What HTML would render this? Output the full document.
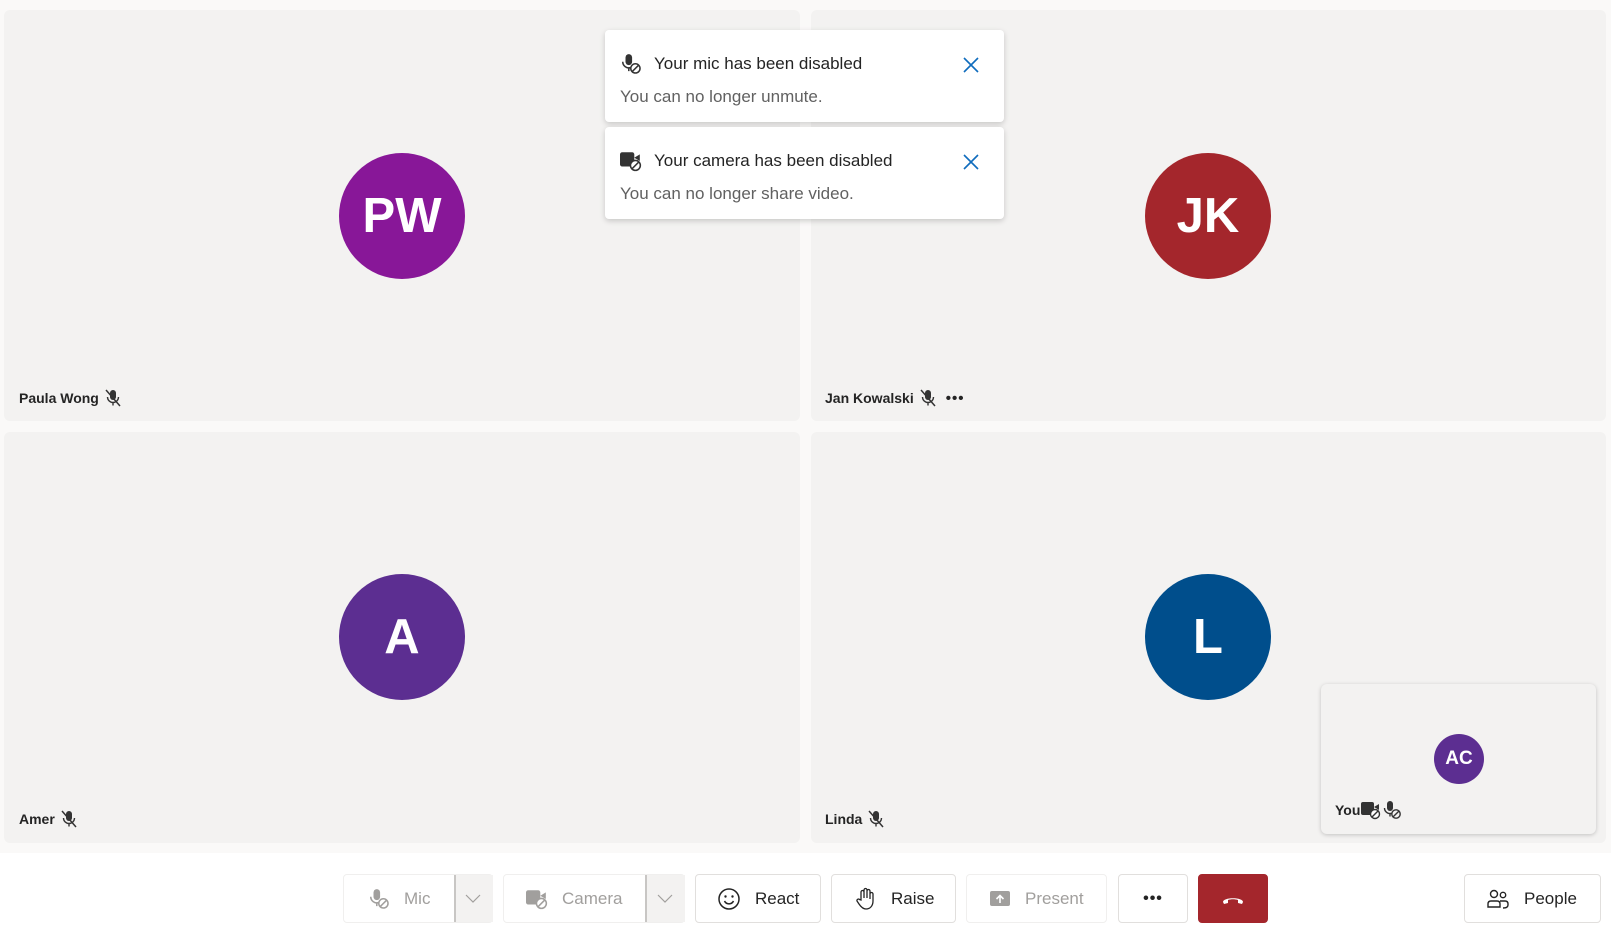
<!DOCTYPE html>
<html><head><meta charset="utf-8"><style>
*{box-sizing:border-box;margin:0;padding:0}
body{width:1611px;height:929px;background:#fff;font-family:"Liberation Sans",sans-serif;position:relative;overflow:hidden;color:#242424}
.band{position:absolute;left:0;top:0;width:1611px;height:853px;background:#faf9f8}
.tile{position:absolute;background:#f3f2f1;border-radius:6px}
.av{position:absolute;border-radius:50%;color:#fff;font-weight:bold;display:flex;align-items:center;justify-content:center}
.name{position:absolute;font-size:14px;font-weight:600;display:flex;align-items:center;gap:4px}
.toast{position:absolute;left:605px;width:399px;height:92px;background:#fff;border-radius:4px;box-shadow:0 2px 6px rgba(0,0,0,.18)}
.toast .t{position:absolute;left:49px;top:24px;font-size:17px;color:#242424}
.toast .s{position:absolute;left:15px;top:57px;font-size:17px;color:#616161}
.toast .ic{position:absolute;left:15px;top:23px}
.toast .x{position:absolute;left:357px;top:26px}
.btn{position:absolute;top:874px;height:49px;border:1px solid #e1dfdd;border-radius:4px;background:#fff;display:flex;align-items:center;font-size:17px;color:#242424}
.dis{color:#a19f9d}
</style></head><body>
<div class="band"></div>
<div class="tile" style="left:4px;top:10px;width:796px;height:411px"></div>
<div class="tile" style="left:811px;top:10px;width:795px;height:411px"></div>
<div class="tile" style="left:4px;top:432px;width:796px;height:411px"></div>
<div class="tile" style="left:811px;top:432px;width:795px;height:411px"></div>

<div class="av" style="left:339px;top:153px;width:126px;height:126px;background:#881798;font-size:49px">PW</div>
<div class="av" style="left:1145px;top:153px;width:126px;height:126px;background:#a4262c;font-size:49px">JK</div>
<div class="av" style="left:339px;top:574px;width:126px;height:126px;background:#5c2e91;font-size:49px">A</div>
<div class="av" style="left:1145px;top:574px;width:126px;height:126px;background:#004e8c;font-size:49px">L</div>

<svg width="0" height="0" style="position:absolute"><defs>
<symbol id="mm" viewBox="0 0 20 20"><rect x="7" y="2" width="6" height="10" rx="3" fill="#333"/><path d="M4.5 9a5.5 5.5 0 0 0 11 0M10 14.5v3" stroke="#333" stroke-width="1.4" fill="none"/><path d="M3 2l14 16" stroke="#333" stroke-width="1.5"/></symbol>
<symbol id="md" viewBox="0 0 20 20"><rect x="5" y="1" width="6" height="10" rx="3" fill="currentColor"/><path d="M2.5 8a5.5 5.5 0 0 0 7 5.3M8 13.5v3" stroke="currentColor" stroke-width="1.4" fill="none"/><circle cx="14" cy="14" r="4.2" stroke="currentColor" stroke-width="1.4" fill="none"/><path d="M11.2 16.8l5.6-5.6" stroke="currentColor" stroke-width="1.4"/></symbol>
<symbol id="cd" viewBox="0 0 20 20"><rect x="0" y="2" width="13" height="13" rx="2" fill="currentColor"/><path d="M13 7l5-3v6" fill="currentColor"/><circle cx="14" cy="14" r="4.5" stroke="currentColor" stroke-width="1.4" fill="#fff"/><path d="M11 17l6-6" stroke="currentColor" stroke-width="1.4"/></symbol>
</defs></svg>

<div class="name" style="left:19px;top:388px">Paula Wong <svg width="20" height="20"><use href="#mm"/></svg></div>
<div class="name" style="left:825px;top:388px">Jan Kowalski <svg width="20" height="20"><use href="#mm"/></svg><span style="margin-left:4px;font-size:15px;letter-spacing:1px;font-weight:bold">•••</span></div>
<div class="name" style="left:19px;top:809px">Amer <svg width="20" height="20"><use href="#mm"/></svg></div>
<div class="name" style="left:825px;top:809px">Linda <svg width="20" height="20"><use href="#mm"/></svg></div>

<div class="tile" style="left:1321px;top:684px;width:275px;height:150px;box-shadow:0 1px 4px rgba(0,0,0,.2)"></div>
<div class="av" style="left:1434px;top:734px;width:50px;height:50px;background:#5c2e91;font-size:19px">AC</div>
<div class="name" style="left:1335px;top:800px;gap:1px;color:#242424">You <svg width="20" height="20" style="color:#333"><use href="#cd"/></svg><svg width="20" height="20" style="color:#333"><use href="#md"/></svg></div>

<div class="toast" style="top:30px"><svg class="ic" width="22" height="22" style="color:#333"><use href="#md"/></svg><div class="t">Your mic has been disabled</div><div class="s">You can no longer unmute.</div><svg class="x" width="18" height="18"><path d="M2 2l14 14M16 2L2 16" stroke="#0f6cbd" stroke-width="1.6"/></svg></div>
<div class="toast" style="top:127px"><svg class="ic" width="22" height="22" style="color:#333"><use href="#cd"/></svg><div class="t">Your camera has been disabled</div><div class="s">You can no longer share video.</div><svg class="x" width="18" height="18"><path d="M2 2l14 14M16 2L2 16" stroke="#0f6cbd" stroke-width="1.6"/></svg></div>

<div class="btn dis" style="left:343px;width:150px;border-color:#f0efee"><svg width="22" height="22" style="margin-left:24px;color:#a19f9d"><use href="#md"/></svg><span style="margin-left:14px">Mic</span><div style="position:absolute;left:110px;top:0;width:39px;height:47px;background:#f3f2f1;border-left:2px solid #c8c6c4"></div><svg style="position:absolute;left:121px;top:17px" width="16" height="12"><path d="M1 3l7 7 7-7" stroke="#a19f9d" fill="none" stroke-width="1.2"/></svg></div>
<div class="btn dis" style="left:503px;width:182px;border-color:#f0efee"><svg width="22" height="22" style="margin-left:22px;color:#a19f9d"><use href="#cd"/></svg><span style="margin-left:14px">Camera</span><div style="position:absolute;left:141px;top:0;width:40px;height:47px;background:#f3f2f1;border-left:2px solid #c8c6c4"></div><svg style="position:absolute;left:153px;top:17px" width="16" height="12"><path d="M1 3l7 7 7-7" stroke="#a19f9d" fill="none" stroke-width="1.2"/></svg></div>
<div class="btn" style="left:695px;width:126px"><svg width="24" height="24" style="margin-left:21px"><circle cx="12" cy="12" r="10" stroke="#242424" stroke-width="1.5" fill="none"/><circle cx="8.5" cy="9.5" r="1.2" fill="#242424"/><circle cx="15.5" cy="9.5" r="1.2" fill="#242424"/><path d="M7.5 14a5 5 0 0 0 9 0" stroke="#242424" stroke-width="1.5" fill="none"/></svg><span style="margin-left:14px">React</span></div>
<div class="btn" style="left:831px;width:125px"><svg width="22" height="24" style="margin-left:23px"><path d="M6 13V5a1.5 1.5 0 0 1 3 0v6V3a1.5 1.5 0 0 1 3 0v8V4a1.5 1.5 0 0 1 3 0v8V7a1.5 1.5 0 0 1 3 0v7c0 5-3 8-7 8-3 0-5-2-7-5l-2-3a1.5 1.5 0 0 1 2.5-1.5z" stroke="#242424" stroke-width="1.3" fill="none"/></svg><span style="margin-left:14px">Raise</span></div>
<div class="btn dis" style="left:966px;width:141px;border-color:#f0efee"><svg width="22" height="20" style="margin-left:22px"><rect x="1" y="2" width="20" height="15" rx="2" fill="#a19f9d"/><path d="M11 14V7M7.5 10L11 6.5 14.5 10" stroke="#fff" stroke-width="1.6" fill="none"/></svg><span style="margin-left:14px">Present</span></div>
<div class="btn" style="left:1118px;width:70px;justify-content:center;font-weight:bold;font-size:16px;letter-spacing:1px">•••</div>
<div class="btn" style="left:1198px;width:70px;background:#a4262c;border-color:#a4262c;justify-content:center"><svg width="24" height="12"><path d="M2 9c0-5 20-5 20 0l-1 2-4-1v-3c-3-1-7-1-10 0v3l-4 1z" fill="#fff"/></svg></div>
<div class="btn" style="left:1464px;width:137px"><svg width="24" height="22" style="margin-left:21px"><circle cx="8" cy="6" r="3.5" stroke="#242424" stroke-width="1.4" fill="none"/><circle cx="17" cy="7" r="2.7" stroke="#242424" stroke-width="1.4" fill="none"/><path d="M2 19v-3c0-2 1-3 3-3h6c2 0 3 1 3 3v3zM14 13h5c2 0 3 1 3 3v1c0 2-2 3-5 3" stroke="#242424" stroke-width="1.4" fill="none"/></svg><span style="margin-left:14px">People</span></div>
</body></html>
